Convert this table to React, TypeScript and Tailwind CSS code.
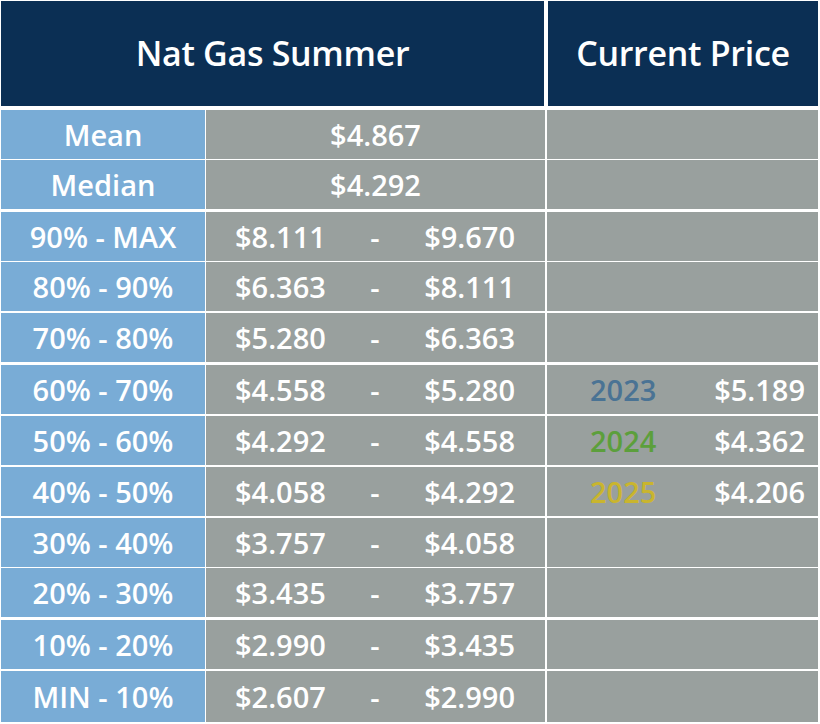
import React from "react";

type Row = {
  label: string;
  cls: string;
  single?: string;
  low?: string;
  high?: string;
  year?: { text: string; color: string; price: string };
};

const rows: Row[] = [
  { label: "Mean", cls: "mt-[4px] h-[49px]", single: "$4.867" },
  { label: "Median", cls: "mt-px h-[49px]", single: "$4.292" },
  { label: "90% - MAX", cls: "mt-[3px] h-[49px]", low: "$8.111", high: "$9.670" },
  { label: "80% - 90%", cls: "mt-px h-[49px]", low: "$6.363", high: "$8.111" },
  { label: "70% - 80%", cls: "mt-[2px] h-[49px]", low: "$5.280", high: "$6.363" },
  {
    label: "60% - 70%",
    cls: "mt-[3px] h-[49px]",
    low: "$4.558",
    high: "$5.280",
    year: { text: "2023", color: "text-[#4a7394]", price: "$5.189" },
  },
  {
    label: "50% - 60%",
    cls: "mt-[2px] h-[49px]",
    low: "$4.292",
    high: "$4.558",
    year: { text: "2024", color: "text-[#5c9f3c]", price: "$4.362" },
  },
  {
    label: "40% - 50%",
    cls: "mt-[2px] h-[49px]",
    low: "$4.058",
    high: "$4.292",
    year: { text: "2025", color: "text-[#c9b52e]", price: "$4.206" },
  },
  { label: "30% - 40%", cls: "mt-[2px] h-[49px]", low: "$3.757", high: "$4.058" },
  { label: "20% - 30%", cls: "mt-px h-[49px]", low: "$3.435", high: "$3.757" },
  { label: "10% - 20%", cls: "mt-[3px] h-[49px]", low: "$2.990", high: "$3.435" },
  { label: "MIN - 10%", cls: "mt-[2px] h-[51px]", low: "$2.607", high: "$2.990" },
];

export default function App() {
  return (
    <div
      className="w-[820px] h-[724px] bg-white pl-px pt-px overflow-hidden"
      style={{ fontFamily: "'Open Sans', Lato, sans-serif" }}
    >
      {/* Header */}
      <div className="flex gap-[4px] h-[105px]">
        <div className="w-[543px] bg-[#0b2f54] flex items-center justify-center text-white text-[34px] font-semibold tracking-[-0.3px]">
          Nat Gas Summer
        </div>
        <div className="w-[270px] bg-[#0b2f54] flex items-center justify-center text-white text-[34px] font-semibold tracking-[-0.3px]">
          Current Price
        </div>
      </div>

      {/* Body */}
      {rows.map((r) => (
        <div key={r.label} className={`flex gap-px ${r.cls}`}>
          <div className="w-[204px] bg-[#79acd6] flex items-center justify-center text-white text-[29px] font-semibold">
            {r.label}
          </div>
          <div className="w-[339px] bg-[#99a09e] flex items-center text-white text-[29px] font-semibold">
            {r.single ? (
              <span className="w-full text-center">{r.single}</span>
            ) : (
              <div className="w-full flex items-center justify-between pl-[29px] pr-[30px]">
                <span>{r.low}</span>
                <span>-</span>
                <span>{r.high}</span>
              </div>
            )}
          </div>
          <div className="w-[271px] ml-px bg-[#99a09e] flex items-center justify-between pl-[43px] pr-[13px] text-[29px] font-semibold">
            {r.year && (
              <>
                <span className={r.year.color}>{r.year.text}</span>
                <span className="text-white">{r.year.price}</span>
              </>
            )}
          </div>
        </div>
      ))}
    </div>
  );
}
